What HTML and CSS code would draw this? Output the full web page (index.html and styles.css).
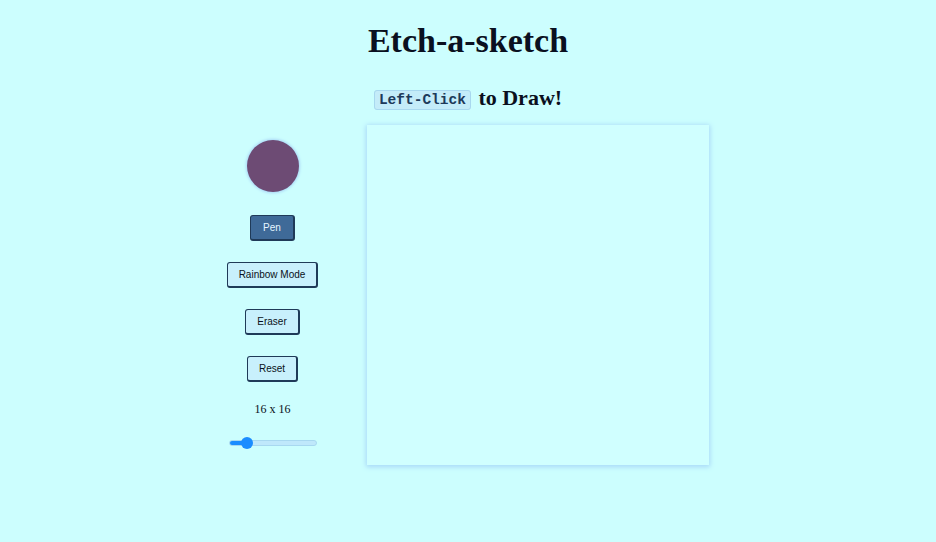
FILE: index.html
```html
<!DOCTYPE html>
<html>
<head>
<meta charset="utf-8">
<link rel="stylesheet" href="styles.css">
</head>
<body>
<h1 class="title">Etch-a-sketch</h1>
<h2 class="subtitle"><code class="key">Left-Click</code> to Draw!</h2>
<main class="layout">
  <aside class="controls">
    <div class="swatch"></div>
    <button class="btn btn-active">Pen</button>
    <button class="btn">Rainbow Mode</button>
    <button class="btn">Eraser</button>
    <button class="btn">Reset</button>
    <div class="size-label">16 x 16</div>
    <input class="slider" type="range" min="1" max="100" value="16">
  </aside>
  <section class="grid"></section>
</main>
</body>
</html>
```
FILE: styles.css
```css
html, body {
  margin: 0;
  padding: 0;
}
body {
  background: #ccfefe;
  font-family: "Liberation Serif", "Times New Roman", serif;
  color: #0a1020;
  height: 542px;
  overflow: hidden;
}
.title {
  text-align: center;
  font-size: 34px;
  font-weight: bold;
  margin: 21px 0 0;
  line-height: 40px;
}
.subtitle {
  text-align: center;
  font-size: 22px;
  font-weight: bold;
  margin: 24px 0 0;
  line-height: 26px;
}
.key {
  font-family: "Liberation Mono", "Courier New", monospace;
  font-size: 14.5px;
  font-weight: bold;
  color: #1d3a5a;
  background: #c4ecf9;
  border: 1px solid #a8d8ef;
  border-radius: 3px;
  padding: 1px 4px;
  margin-right: 2px;
  vertical-align: 1px;
}
.layout {
  display: flex;
  justify-content: center;
  gap: 49px;
  margin-top: 12px;
}
.controls {
  width: 90px;
  display: flex;
  flex-direction: column;
  align-items: center;
  padding-top: 15px;
}
.swatch {
  width: 52px;
  height: 52px;
  border-radius: 50%;
  background: #6d4b74;
  box-shadow: 0 0 3px 1px #a8d4f6;
}
.btn {
  font-family: "Liberation Sans", Arial, sans-serif;
  font-size: 10px;
  white-space: nowrap;
  height: 26px;
  padding: 0 11px;
  background: #c8f0fc;
  color: #0a1020;
  border: 1px solid #1f3a58;
  border-bottom-width: 2px;
  border-right-width: 2px;
  border-radius: 3px;
  margin-top: 21px;
}
.controls .swatch + .btn {
  margin-top: 23px;
}
.btn-active {
  background: #3f6a98;
  color: #e6f6ff;
  padding: 0 12px;
}
.size-label {
  font-size: 12px;
  margin-top: 20px;
  line-height: 14px;
}
.slider {
  -webkit-appearance: none;
  appearance: none;
  width: 88px;
  height: 6px;
  margin: 24px 0 0;
  border-radius: 3px;
  background: linear-gradient(to right, #1a8cff 0 16%, #bfe8fb 16% 100%);
  border: 1px solid #a8d8f0;
  box-sizing: border-box;
}
.slider::-webkit-slider-thumb {
  -webkit-appearance: none;
  appearance: none;
  width: 12px;
  height: 12px;
  border-radius: 50%;
  background: #1a8cff;
  border: none;
}
.grid {
  width: 342px;
  height: 340px;
  background: #d0ffff;
  box-shadow: 0 1px 5px 1px #a8d8f8;
}
```
